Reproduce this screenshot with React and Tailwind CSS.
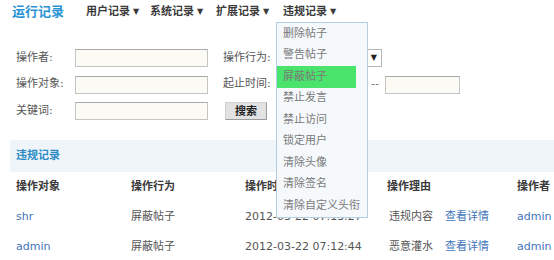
import React from "react";

const menuItems = [
  "删除帖子",
  "警告帖子",
  "屏蔽帖子",
  "禁止发言",
  "禁止访问",
  "锁定用户",
  "清除头像",
  "清除签名",
  "清除自定义头衔",
];

const rows = [
  { target: "shr", action: "屏蔽帖子", time: "2012-03-22 07:13:27", reason: "违规内容", user: "admin" },
  { target: "admin", action: "屏蔽帖子", time: "2012-03-22 07:12:44", reason: "恶意灌水", user: "admin" },
];

function Field({ className = "" }) {
  return (
    <div
      className={`h-[18px] border border-[#c4c4c4] border-t-[#a9a9a9] bg-[#fbfaf4] ${className}`}
    />
  );
}

function NavItem({ label, width }) {
  return (
    <div className={`${width} flex items-center gap-[3px] text-[#3a3a3a] font-bold`}>
      <span>{label}</span>
      <span className="text-[8px] leading-none">▼</span>
    </div>
  );
}

export default function App() {
  return (
    <div className="relative w-[554px] h-[260px] overflow-hidden bg-white text-[11px] text-[#555] font-['DejaVu_Sans','Noto_Sans_CJK_SC',sans-serif]">
      {/* top nav */}
      <div className="h-[24px] flex items-center pl-[12px]">
        <div className="w-[74px] text-[13px] font-bold text-[#2a93d5]">运行记录</div>
        <NavItem label="用户记录" width="w-[64px]" />
        <NavItem label="系统记录" width="w-[66px]" />
        <NavItem label="扩展记录" width="w-[67px]" />
        <NavItem label="违规记录" width="w-[60px]" />
      </div>

      {/* search form */}
      <div className="mt-[21px] pl-[16px] flex flex-col">
        <div className="h-[26px] flex items-center">
          <div className="w-[59px]">操作者:</div>
          <Field className="w-[133px]" />
          <div className="w-[60px] ml-[15px]">操作行为:</div>
          <div className="w-[99px] h-[18px] border border-[#b5b5b5] bg-white flex items-center justify-end pr-[4px]">
            <span className="text-[8px] text-[#222]">▼</span>
          </div>
        </div>
        <div className="h-[27px] flex items-center">
          <div className="w-[59px]">操作对象:</div>
          <Field className="w-[133px]" />
          <div className="w-[60px] ml-[15px]">起止时间:</div>
          <Field className="w-[82px]" />
          <div className="w-[20px] text-center text-[#777]">--</div>
          <Field className="w-[75px]" />
        </div>
        <div className="h-[26px] flex items-center">
          <div className="w-[59px]">关键词:</div>
          <Field className="w-[133px]" />
          <button
            type="button"
            className="ml-[17px] w-[42px] h-[18px] border border-[#9c9c9c] border-t-[#d0d0d0] border-l-[#d0d0d0] bg-[#e2e2e2] text-[#222] font-bold leading-none"
          >
            搜索
          </button>
        </div>
      </div>

      {/* section title */}
      <div className="mt-[16px] ml-[10px] h-[32px] bg-[#eff5f9] flex items-center pl-[6px] text-[#2b8bc7] font-bold">
        违规记录
      </div>

      {/* table */}
      <div className="pl-[16px]">
        <div className="h-[30px] flex items-center font-bold text-[#3a3a3a]">
          <div className="w-[115px]">操作对象</div>
          <div className="w-[114px]">操作行为</div>
          <div className="w-[142px]">操作时间</div>
          <div className="w-[130px]">操作理由</div>
          <div>操作者</div>
        </div>
        {rows.map((r, i) => (
          <div key={i} className="h-[30px] flex items-center">
            <div className="w-[115px] text-[#3f74b8]">{r.target}</div>
            <div className="w-[114px]">{r.action}</div>
            <div className="w-[144px]">{r.time}</div>
            <div className="w-[56px]">{r.reason}</div>
            <div className="w-[72px] text-[#3f74b8]">查看详情</div>
            <div className="text-[#3f74b8]">{r.user}</div>
          </div>
        ))}
      </div>

      {/* open dropdown menu */}
      <div className="absolute left-[276px] top-[22px] w-[92px] border border-[#b3cde2] bg-[#f5f9fc] py-0">
        {menuItems.map((m, i) => (
          <div
            key={m}
            className={`h-[21.5px] flex items-center pl-[6px] text-[#7a7a7a] ${
              i === 2 ? "w-[79px] bg-[#4ae36b]" : ""
            }`}
          >
            {m}
          </div>
        ))}
      </div>
    </div>
  );
}
